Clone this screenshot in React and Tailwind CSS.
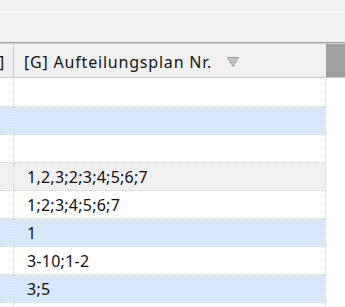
export default function App() {
  const rows = [
    { bg: "bg-white", text: "" },
    { bg: "bg-[#d9e7fb]", text: "" },
    { bg: "bg-white", text: "" },
    { bg: "bg-[#f0f0f0]", text: "1,2,3;2;3;4;5;6;7" },
    { bg: "bg-white", text: "1;2;3;4;5;6;7" },
    { bg: "bg-[#d9e7fb]", text: "1" },
    { bg: "bg-white", text: "3-10;1-2" },
    { bg: "bg-[#d9e7fb]", text: "3;5" },
    { bg: "bg-white", text: "" },
  ];
  return (
    <div className="w-[345px] h-[307px] overflow-hidden bg-white" style={{ fontFamily: '"Noto Sans", "Open Sans", sans-serif' }}>
      <div className="h-[42px] bg-[#f0f0f0] flex flex-col">
        <div className="h-[12px]" />
        <div className="h-px bg-white" />
      </div>
      <div className="h-px bg-[#a0a0a0]" />
      <div className="h-px bg-[#d4d4d4]" />
      <div className="flex h-[34px] bg-[#f0f0f0] border-b border-[#c8c8c8]">
        <div className="w-[13px] flex items-center text-[16px] text-[#141414] leading-none overflow-hidden pt-[2px]">
          <span className="-ml-[1px]">]</span>
        </div>
        <div className="w-px bg-[#c8c8c8]" />
        <div className="w-[312px] flex items-center pl-[10px] text-[16px] tracking-[0.8px] text-[#141414] leading-none pt-[2px]">
          <span>[G] Aufteilungsplan Nr.</span>
          <svg className="ml-[15px]" width="12" height="10" viewBox="0 0 12 10">
            <path d="M0.5 0.5 L11.5 0.5 L6 9.5 Z" fill="#c4c4c4" stroke="#9a9a9a" strokeWidth="1" />
          </svg>
        </div>
        <div className="flex-1 bg-[#a0a0a0]" />
      </div>
      <div className="h-px bg-white" />
      <div className="flex flex-col">
        {rows.map((r, i) => (
          <div key={i} className="flex h-[28px]">
            <div className={`w-[14px] h-[28px] border-r border-b border-dotted border-[#d4d4d4] bg-clip-padding ${r.bg}`} />
            <div className={`w-[312px] h-[28px] border-r border-b border-dotted border-[#d4d4d4] bg-clip-padding ${r.bg} flex items-center pl-[13px] text-[16px] tracking-[0.25px] text-[#111] leading-none`}>
              {r.text}
            </div>
          </div>
        ))}
      </div>
    </div>
  );
}
